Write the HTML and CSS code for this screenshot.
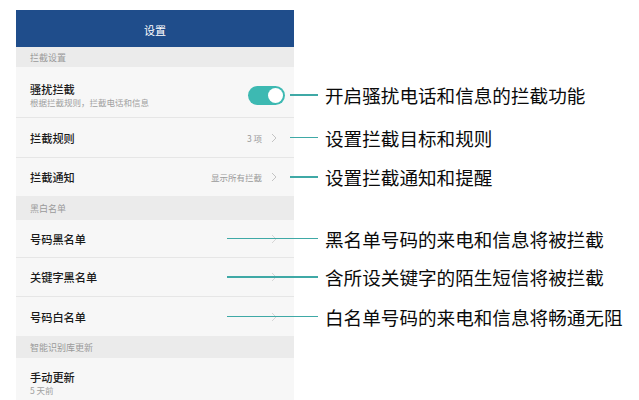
FILE: index.html
```html
<!DOCTYPE html>
<html lang="zh">
<head>
<meta charset="utf-8">
<title>设置</title>
<link rel="stylesheet" href="styles.css">
</head>
<body>
<div class="page">
  <div class="panel">
    <div class="header">设置</div>

    <div class="section s1">拦截设置</div>

    <div class="row r1 bordered">
      <div class="text">
        <div class="title">骚扰拦截</div>
        <div class="sub">根据拦截规则，拦截电话和信息</div>
      </div>
      <div class="toggle"><span class="knob"></span></div>
      <div class="callout near"><span class="line"></span><span class="note">开启骚扰电话和信息的拦截功能</span></div>
    </div>

    <div class="row r2 bordered">
      <div class="title">拦截规则</div>
      <div class="value">3 项</div>
      <svg class="chev" width="6" height="10" viewBox="0 0 6 10"><path d="M1 1 L5 5 L1 9" fill="none" stroke="#c4c4c4" stroke-width="1"/></svg>
      <div class="callout near"><span class="line"></span><span class="note">设置拦截目标和规则</span></div>
    </div>

    <div class="row r3">
      <div class="title">拦截通知</div>
      <div class="value">显示所有拦截</div>
      <svg class="chev" width="6" height="10" viewBox="0 0 6 10"><path d="M1 1 L5 5 L1 9" fill="none" stroke="#c4c4c4" stroke-width="1"/></svg>
      <div class="callout near"><span class="line"></span><span class="note">设置拦截通知和提醒</span></div>
    </div>

    <div class="section s2">黑白名单</div>

    <div class="row r4 bordered">
      <div class="title">号码黑名单</div>
      <svg class="chev" width="6" height="10" viewBox="0 0 6 10"><path d="M1 1 L5 5 L1 9" fill="none" stroke="#d6d6d6" stroke-width="1"/></svg>
      <div class="callout far"><span class="line"></span><span class="note">黑名单号码的来电和信息将被拦截</span></div>
    </div>

    <div class="row r5 bordered">
      <div class="title">关键字黑名单</div>
      <svg class="chev" width="6" height="10" viewBox="0 0 6 10"><path d="M1 1 L5 5 L1 9" fill="none" stroke="#d6d6d6" stroke-width="1"/></svg>
      <div class="callout far"><span class="line"></span><span class="note">含所设关键字的陌生短信将被拦截</span></div>
    </div>

    <div class="row r6">
      <div class="title">号码白名单</div>
      <svg class="chev" width="6" height="10" viewBox="0 0 6 10"><path d="M1 1 L5 5 L1 9" fill="none" stroke="#d6d6d6" stroke-width="1"/></svg>
      <div class="callout far"><span class="line"></span><span class="note">白名单号码的来电和信息将畅通无阻</span></div>
    </div>

    <div class="section s3">智能识别库更新</div>

    <div class="row r7">
      <div class="text">
        <div class="title">手动更新</div>
        <div class="sub">5 天前</div>
      </div>
    </div>
  </div>
</div>
</body>
</html>
```

FILE: styles.css
```css
* { box-sizing: border-box; }

html, body {
  margin: 0;
  padding: 0;
  background: #ffffff;
  overflow: hidden;
}

body {
  width: 639px;
  height: 400px;
  font-family: "Noto Sans CJK SC", "Noto Sans", sans-serif;
}

.page {
  padding: 10px 0 0 16px;
}

.panel {
  width: 278px;
  display: flex;
  flex-direction: column;
  background: #f7f7f7;
}

.header {
  height: 37px;
  background: #1f4d8b;
  color: #ffffff;
  font-size: 11px;
  display: flex;
  align-items: center;
  justify-content: center;
  padding-top: 2px;
}

.section {
  background: #ebebeb;
  color: #9a9a9a;
  font-size: 9px;
  padding-left: 14px;
  display: flex;
  align-items: center;
}
.s1 { height: 20px; }
.s2 { height: 24px; }
.s3 { height: 22px; }

.row {
  position: relative;
  display: flex;
  align-items: center;
  padding: 0 17px 0 14px;
  background: #f7f7f7;
}
.row.bordered { border-bottom: 1px solid #e6e6e6; }

.r1 { height: 51px; padding-top: 7px; padding-right: 9px; }
.r2 { height: 40px; }
.r3 { height: 38px; }
.r4 { height: 38px; }
.r5 { height: 39px; }
.r6 { height: 39px; }
.r7 { height: 44px; align-items: flex-start; padding-top: 12px; }

.text {
  flex: 1;
  display: flex;
  flex-direction: column;
}

.title {
  flex: 1;
  font-size: 11.2px;
  line-height: 14px;
  font-weight: 500;
  color: #1a1a1a;
}

.sub {
  font-size: 8.5px;
  line-height: 13px;
  color: #a0a0a0;
}

.value {
  font-size: 8.5px;
  color: #9a9a9a;
  margin-right: 9px;
}

.chev { display: block; flex: none; }

.toggle {
  width: 37px;
  height: 19px;
  border-radius: 10px;
  background: #3db9b2;
  display: flex;
  align-items: center;
  justify-content: flex-end;
  padding-right: 2px;
}
.knob {
  width: 15px;
  height: 15px;
  border-radius: 50%;
  background: #ffffff;
}

.callout {
  position: absolute;
  top: 50%;
  transform: translateY(-50%);
  display: flex;
  align-items: center;
  gap: 7px;
  white-space: nowrap;
}
.callout.near { left: 274px; }
.callout.far { left: 211px; }
.r1 .callout { margin-top: 3px; }

.line {
  display: block;
  height: 1.5px;
  background: #3fa9a6;
}
.near .line { width: 28px; }
.far .line { width: 91px; }

.note {
  font-size: 18.6px;
  color: #0a0a0a;
  line-height: 24px;
}
```
